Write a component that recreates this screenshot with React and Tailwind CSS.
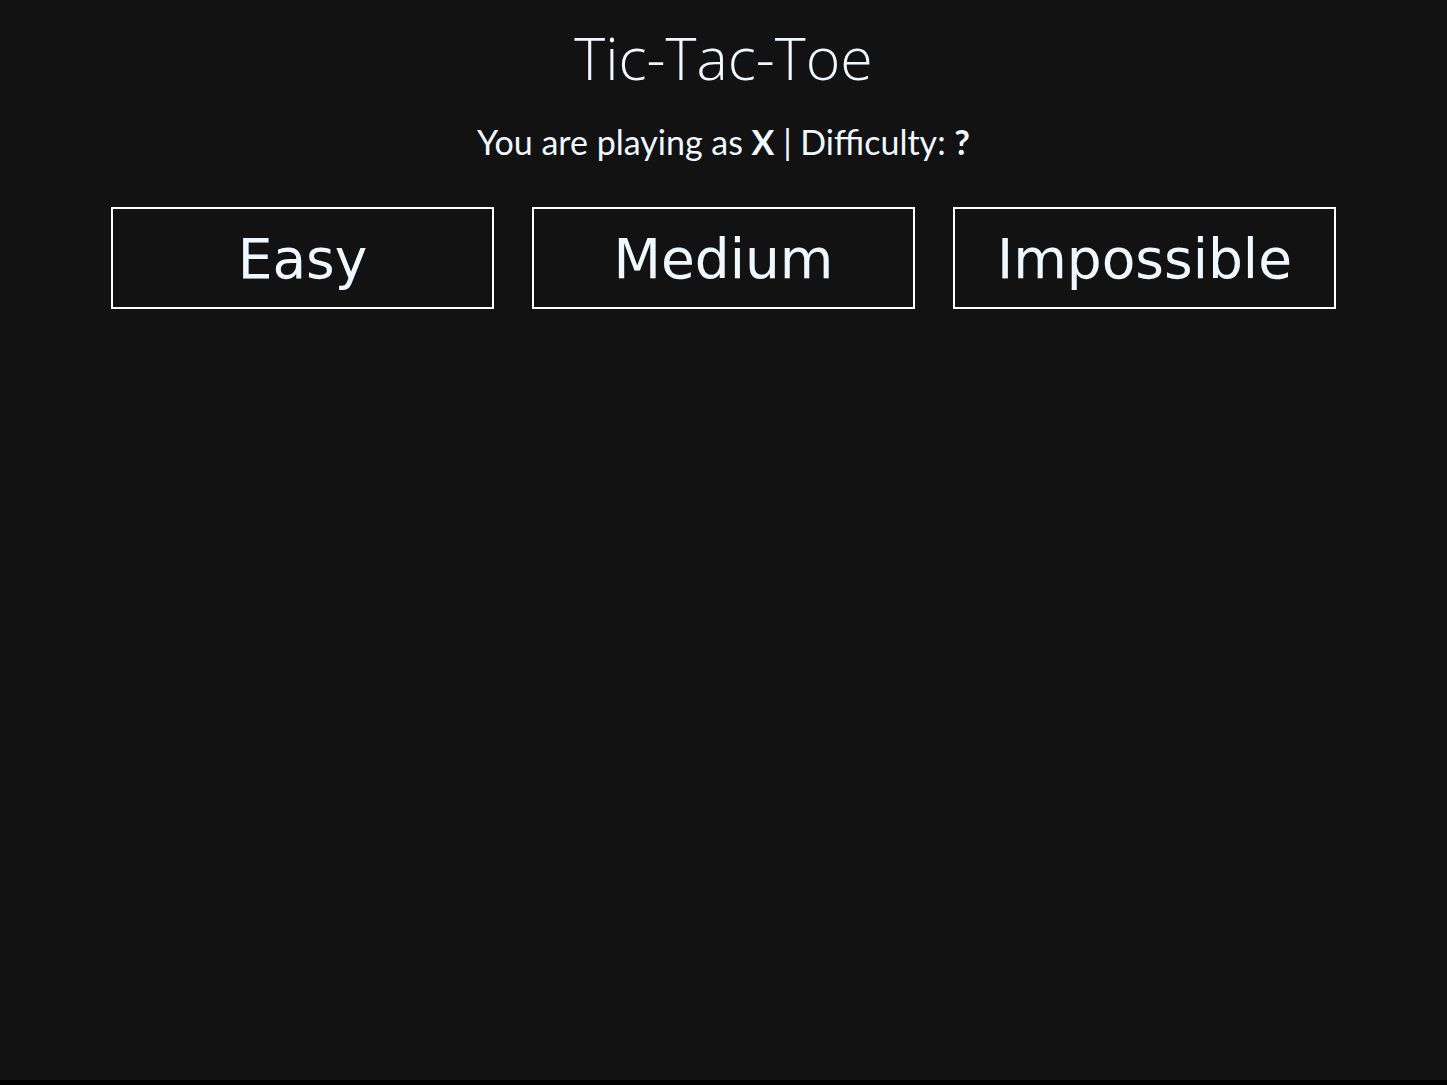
const levels = ['Easy', 'Medium', 'Impossible']

const App = () => {
  return (
    <div className="min-h-screen bg-black">
      <div className="h-[1080px] bg-[#121212] text-[#f0f8ff] flex flex-col items-center">
        {/* Title */}
        <h1 className="pt-[27px] text-[59px] leading-[60px] font-light font-['Open_Sans',sans-serif]">
          Tic-Tac-Toe
        </h1>

        {/* Status line */}
        <p className="mt-[38px] text-[34px] leading-[34px] font-['Lato',sans-serif]">
          You are playing as <b>X</b> | Difficulty: <b>?</b>
        </p>

        {/* Difficulty picker */}
        <div className="mt-[48px] flex gap-[38px]">
          {levels.map((level) => (
            <button
              key={level}
              className="w-[383px] h-[102px] border-2 border-white bg-transparent text-[#f0f8ff] flex items-center justify-center pt-[2px] text-[55px] leading-none font-['DejaVu_Sans',sans-serif] cursor-pointer"
            >
              {level}
            </button>
          ))}
        </div>
      </div>
    </div>
  )
}

export default App
